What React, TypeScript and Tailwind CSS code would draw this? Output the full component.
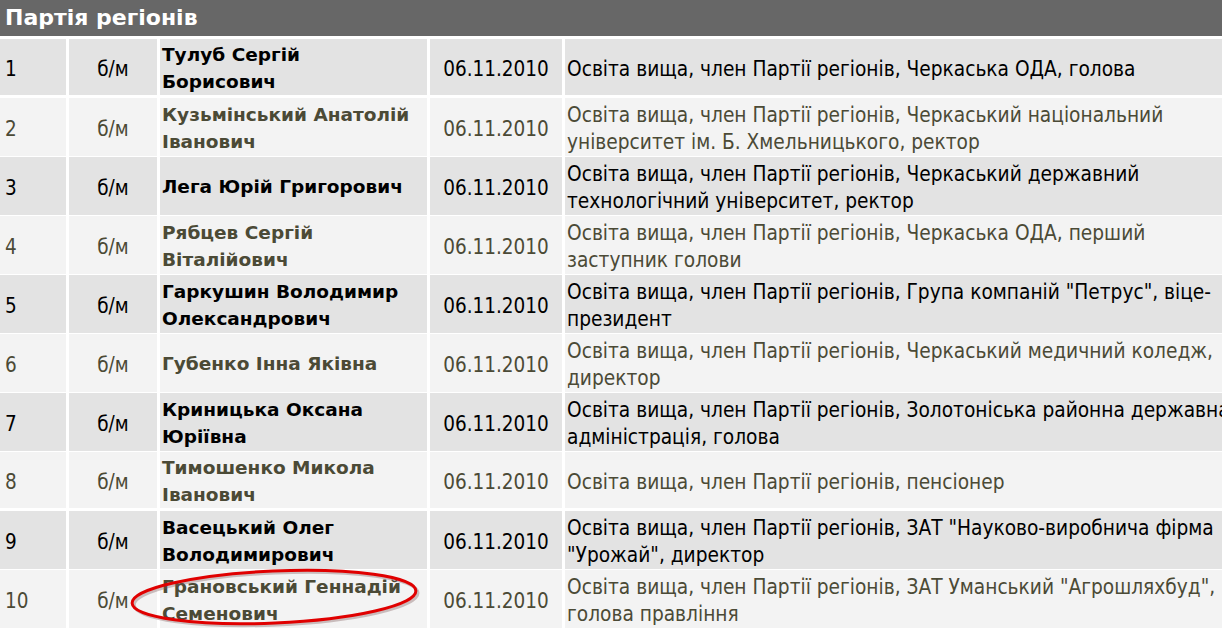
import React from "react";

type Row = { n: string; name: string[]; desc: string[] };

const base = "Освіта вища, член Партії регіонів, ";

const rows: Row[] = [
  { n: "1", name: ["Тулуб Сергій", "Борисович"], desc: [base + "Черкаська ОДА, голова"] },
  { n: "2", name: ["Кузьмінський Анатолій", "Іванович"], desc: [base + "Черкаський національний", "університет ім. Б. Хмельницького, ректор"] },
  { n: "3", name: ["Лега Юрій Григорович"], desc: [base + "Черкаський державний", "технологічний університет, ректор"] },
  { n: "4", name: ["Рябцев Сергій", "Віталійович"], desc: [base + "Черкаська ОДА, перший", "заступник голови"] },
  { n: "5", name: ["Гаркушин Володимир", "Олександрович"], desc: [base + "Група компаній \"Петрус\", віце-", "президент"] },
  { n: "6", name: ["Губенко Інна Яківна"], desc: [base + "Черкаський медичний коледж,", "директор"] },
  { n: "7", name: ["Криницька Оксана", "Юріївна"], desc: [base + "Золотоніська районна державна", "адміністрація, голова"] },
  { n: "8", name: ["Тимошенко Микола", "Іванович"], desc: [base + "пенсіонер"] },
  { n: "9", name: ["Васецький Олег", "Володимирович"], desc: [base + "ЗАТ \"Науково-виробнича фірма", "\"Урожай\", директор"] },
  { n: "10", name: ["Грановський Геннадій", "Семенович"], desc: [base + "ЗАТ Уманський \"Агрошляхбуд\",", "голова правління"] },
];

function TableRow({ row, odd }: { row: Row; odd: boolean }) {
  const cell = odd ? "bg-[#e3e3e3] text-black" : "bg-[#f3f3f3] text-[#4b4a36]";
  return (
    <div className="grid h-[56px] grid-cols-[66px_88px_267px_132px_1fr] gap-x-[3px]">
      <div className={`flex items-center pl-[5px] pt-[4px] text-[20.5px] ${cell}`}>{row.n}</div>
      <div className={`flex items-center justify-center pt-[4px] text-[20.5px] ${cell}`}>б/м</div>
      <div className={`flex flex-col justify-center pl-[2px] pt-[1px] font-['DejaVu_Sans',sans-serif] text-[18.5px] font-bold leading-[27px] ${cell}`}>
        {row.name.map((l) => (
          <div key={l} className="whitespace-nowrap">{l}</div>
        ))}
      </div>
      <div className={`flex items-center justify-center pt-[4px] text-[20.5px] ${cell}`}>06.11.2010</div>
      <div className={`flex flex-col justify-center pl-[2px] pt-[4px] text-[20.7px] leading-[27px] ${cell}`}>
        {row.desc.map((l) => (
          <div key={l} className="whitespace-nowrap">{l}</div>
        ))}
      </div>
    </div>
  );
}

export default function App() {
  return (
    <div className="relative h-[629px] w-[1222px] overflow-hidden bg-white font-['DejaVu_Sans_Condensed','DejaVu_Sans',sans-serif]">
      <div className="flex w-[1320px] flex-col gap-[3px]">
        <div className="flex h-[36px] items-center bg-[#676767] pb-[1px] pl-[5px] font-['DejaVu_Sans',sans-serif] text-[22px] font-bold text-white">
          Партія регіонів
        </div>
        {rows.map((r, i) => (
          <TableRow key={r.n} row={r} odd={i % 2 === 0} />
        ))}
        <div className="h-[3px] bg-[#e6e3cf]" />
      </div>
      <svg className="absolute left-[120px] top-[562px]" width="310" height="70" viewBox="0 0 310 70">
        <g transform="rotate(-2.5 155 35)">
          <ellipse cx="156" cy="37" rx="142" ry="26" fill="none" stroke="#7a5555" strokeOpacity="0.35" strokeWidth="3" />
          <ellipse cx="154" cy="35" rx="142" ry="26" fill="none" stroke="#e00000" strokeWidth="3" />
        </g>
      </svg>
    </div>
  );
}
